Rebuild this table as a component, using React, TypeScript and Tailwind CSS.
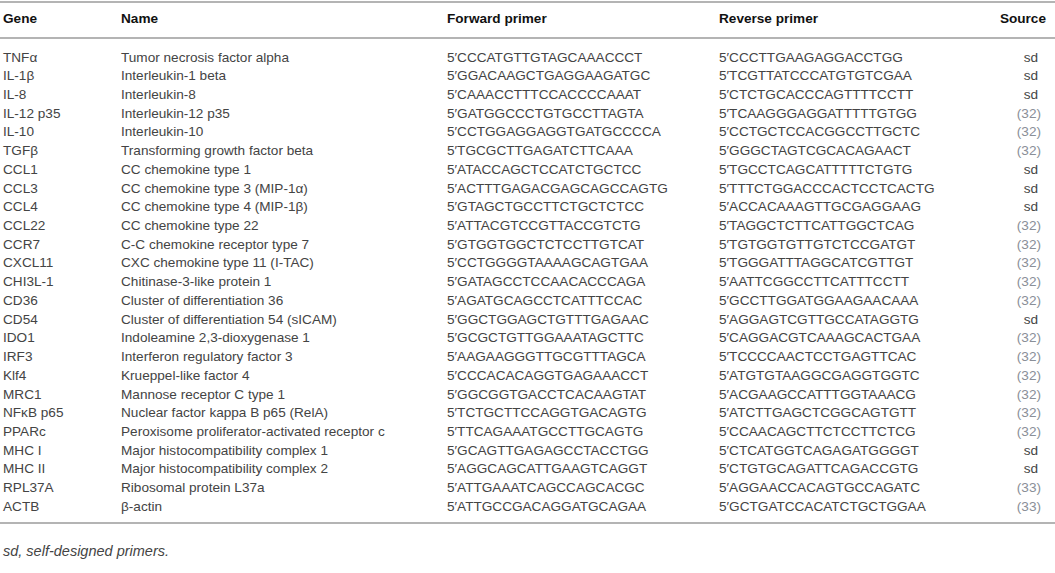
const rows: [string, string, string, string, string][] = [
  ['TNFα', 'Tumor necrosis factor alpha', '5′CCCATGTTGTAGCAAACCCT', '5′CCCTTGAAGAGGACCTGG', 'sd'],
  ['IL-1β', 'Interleukin-1 beta', '5′GGACAAGCTGAGGAAGATGC', '5′TCGTTATCCCATGTGTCGAA', 'sd'],
  ['IL-8', 'Interleukin-8', '5′CAAACCTTTCCACCCCAAAT', '5′CTCTGCACCCAGTTTTCCTT', 'sd'],
  ['IL-12 p35', 'Interleukin-12 p35', '5′GATGGCCCTGTGCCTTAGTA', '5′TCAAGGGAGGATTTTTGTGG', '(32)'],
  ['IL-10', 'Interleukin-10', '5′CCTGGAGGAGGTGATGCCCCA', '5′CCTGCTCCACGGCCTTGCTC', '(32)'],
  ['TGFβ', 'Transforming growth factor beta', '5′TGCGCTTGAGATCTTCAAA', '5′GGGCTAGTCGCACAGAACT', '(32)'],
  ['CCL1', 'CC chemokine type 1', '5′ATACCAGCTCCATCTGCTCC', '5′TGCCTCAGCATTTTTCTGTG', 'sd'],
  ['CCL3', 'CC chemokine type 3 (MIP-1α)', '5′ACTTTGAGACGAGCAGCCAGTG', '5′TTTCTGGACCCACTCCTCACTG', 'sd'],
  ['CCL4', 'CC chemokine type 4 (MIP-1β)', '5′GTAGCTGCCTTCTGCTCTCC', '5′ACCACAAAGTTGCGAGGAAG', 'sd'],
  ['CCL22', 'CC chemokine type 22', '5′ATTACGTCCGTTACCGTCTG', '5′TAGGCTCTTCATTGGCTCAG', '(32)'],
  ['CCR7', 'C-C chemokine receptor type 7', '5′GTGGTGGCTCTCCTTGTCAT', '5′TGTGGTGTTGTCTCCGATGT', '(32)'],
  ['CXCL11', 'CXC chemokine type 11 (I-TAC)', '5′CCTGGGGTAAAAGCAGTGAA', '5′TGGGATTTAGGCATCGTTGT', '(32)'],
  ['CHI3L-1', 'Chitinase-3-like protein 1', '5′GATAGCCTCCAACACCCAGA', '5′AATTCGGCCTTCATTTCCTT', '(32)'],
  ['CD36', 'Cluster of differentiation 36', '5′AGATGCAGCCTCATTTCCAC', '5′GCCTTGGATGGAAGAACAAA', '(32)'],
  ['CD54', 'Cluster of differentiation 54 (sICAM)', '5′GGCTGGAGCTGTTTGAGAAC', '5′AGGAGTCGTTGCCATAGGTG', 'sd'],
  ['IDO1', 'Indoleamine 2,3-dioxygenase 1', '5′GCGCTGTTGGAAATAGCTTC', '5′CAGGACGTCAAAGCACTGAA', '(32)'],
  ['IRF3', 'Interferon regulatory factor 3', '5′AAGAAGGGTTGCGTTTAGCA', '5′TCCCCAACTCCTGAGTTCAC', '(32)'],
  ['Klf4', 'Krueppel-like factor 4', '5′CCCACACAGGTGAGAAACCT', '5′ATGTGTAAGGCGAGGTGGTC', '(32)'],
  ['MRC1', 'Mannose receptor C type 1', '5′GGCGGTGACCTCACAAGTAT', '5′ACGAAGCCATTTGGTAAACG', '(32)'],
  ['NFκB p65', 'Nuclear factor kappa B p65 (RelA)', '5′TCTGCTTCCAGGTGACAGTG', '5′ATCTTGAGCTCGGCAGTGTT', '(32)'],
  ['PPARc', 'Peroxisome proliferator-activated receptor c', '5′TTCAGAAATGCCTTGCAGTG', '5′CCAACAGCTTCTCCTTCTCG', '(32)'],
  ['MHC I', 'Major histocompatibility complex 1', '5′GCAGTTGAGAGCCTACCTGG', '5′CTCATGGTCAGAGATGGGGT', 'sd'],
  ['MHC II', 'Major histocompatibility complex 2', '5′AGGCAGCATTGAAGTCAGGT', '5′CTGTGCAGATTCAGACCGTG', 'sd'],
  ['RPL37A', 'Ribosomal protein L37a', '5′ATTGAAATCAGCCAGCACGC', '5′AGGAACCACAGTGCCAGATC', '(33)'],
  ['ACTB', 'β-actin', '5′ATTGCCGACAGGATGCAGAA', '5′GCTGATCCACATCTGCTGGAA', '(33)'],
];

export default function App() {
  return (
    <div className="w-[1055px] h-[573px] bg-white font-['Liberation_Sans',Arial,sans-serif] text-[13.6px] text-[#444]">
      <div className="pt-[1px]">
        <div className="border-t-[2px] border-b-[2px] border-[#b4b4b4]">
          <div className="flex h-[34px] items-center font-bold text-[#111] pl-[3px] pb-[1px]">
            <div className="w-[118px]">Gene</div>
            <div className="w-[326px]">Name</div>
            <div className="w-[272px]">Forward primer</div>
            <div className="flex-1">Reverse primer</div>
            <div className="w-[70px] text-right pr-[9px]">Source</div>
          </div>
        </div>
        <div className="pt-[9px] pb-[6px] border-b-[2px] border-[#b4b4b4]">
          {rows.map((r) => (
            <div key={r[0]} className="flex h-[18.72px] items-center pl-[3px] leading-none">
              <div className="w-[118px]">{r[0]}</div>
              <div className="w-[326px]">{r[1]}</div>
              <div className="w-[272px]">{r[2]}</div>
              <div className="flex-1">{r[3]}</div>
              <div className={r[4] === 'sd' ? 'w-[70px] pr-[17px] text-right' : 'w-[70px] pr-[14px] text-right text-[#8a8f98]'}>
                {r[4]}
              </div>
            </div>
          ))}
        </div>
        <div className="pt-[17px] pl-[3px] italic text-[14.5px] text-[#444]">sd, self-designed primers.</div>
      </div>
    </div>
  );
}
